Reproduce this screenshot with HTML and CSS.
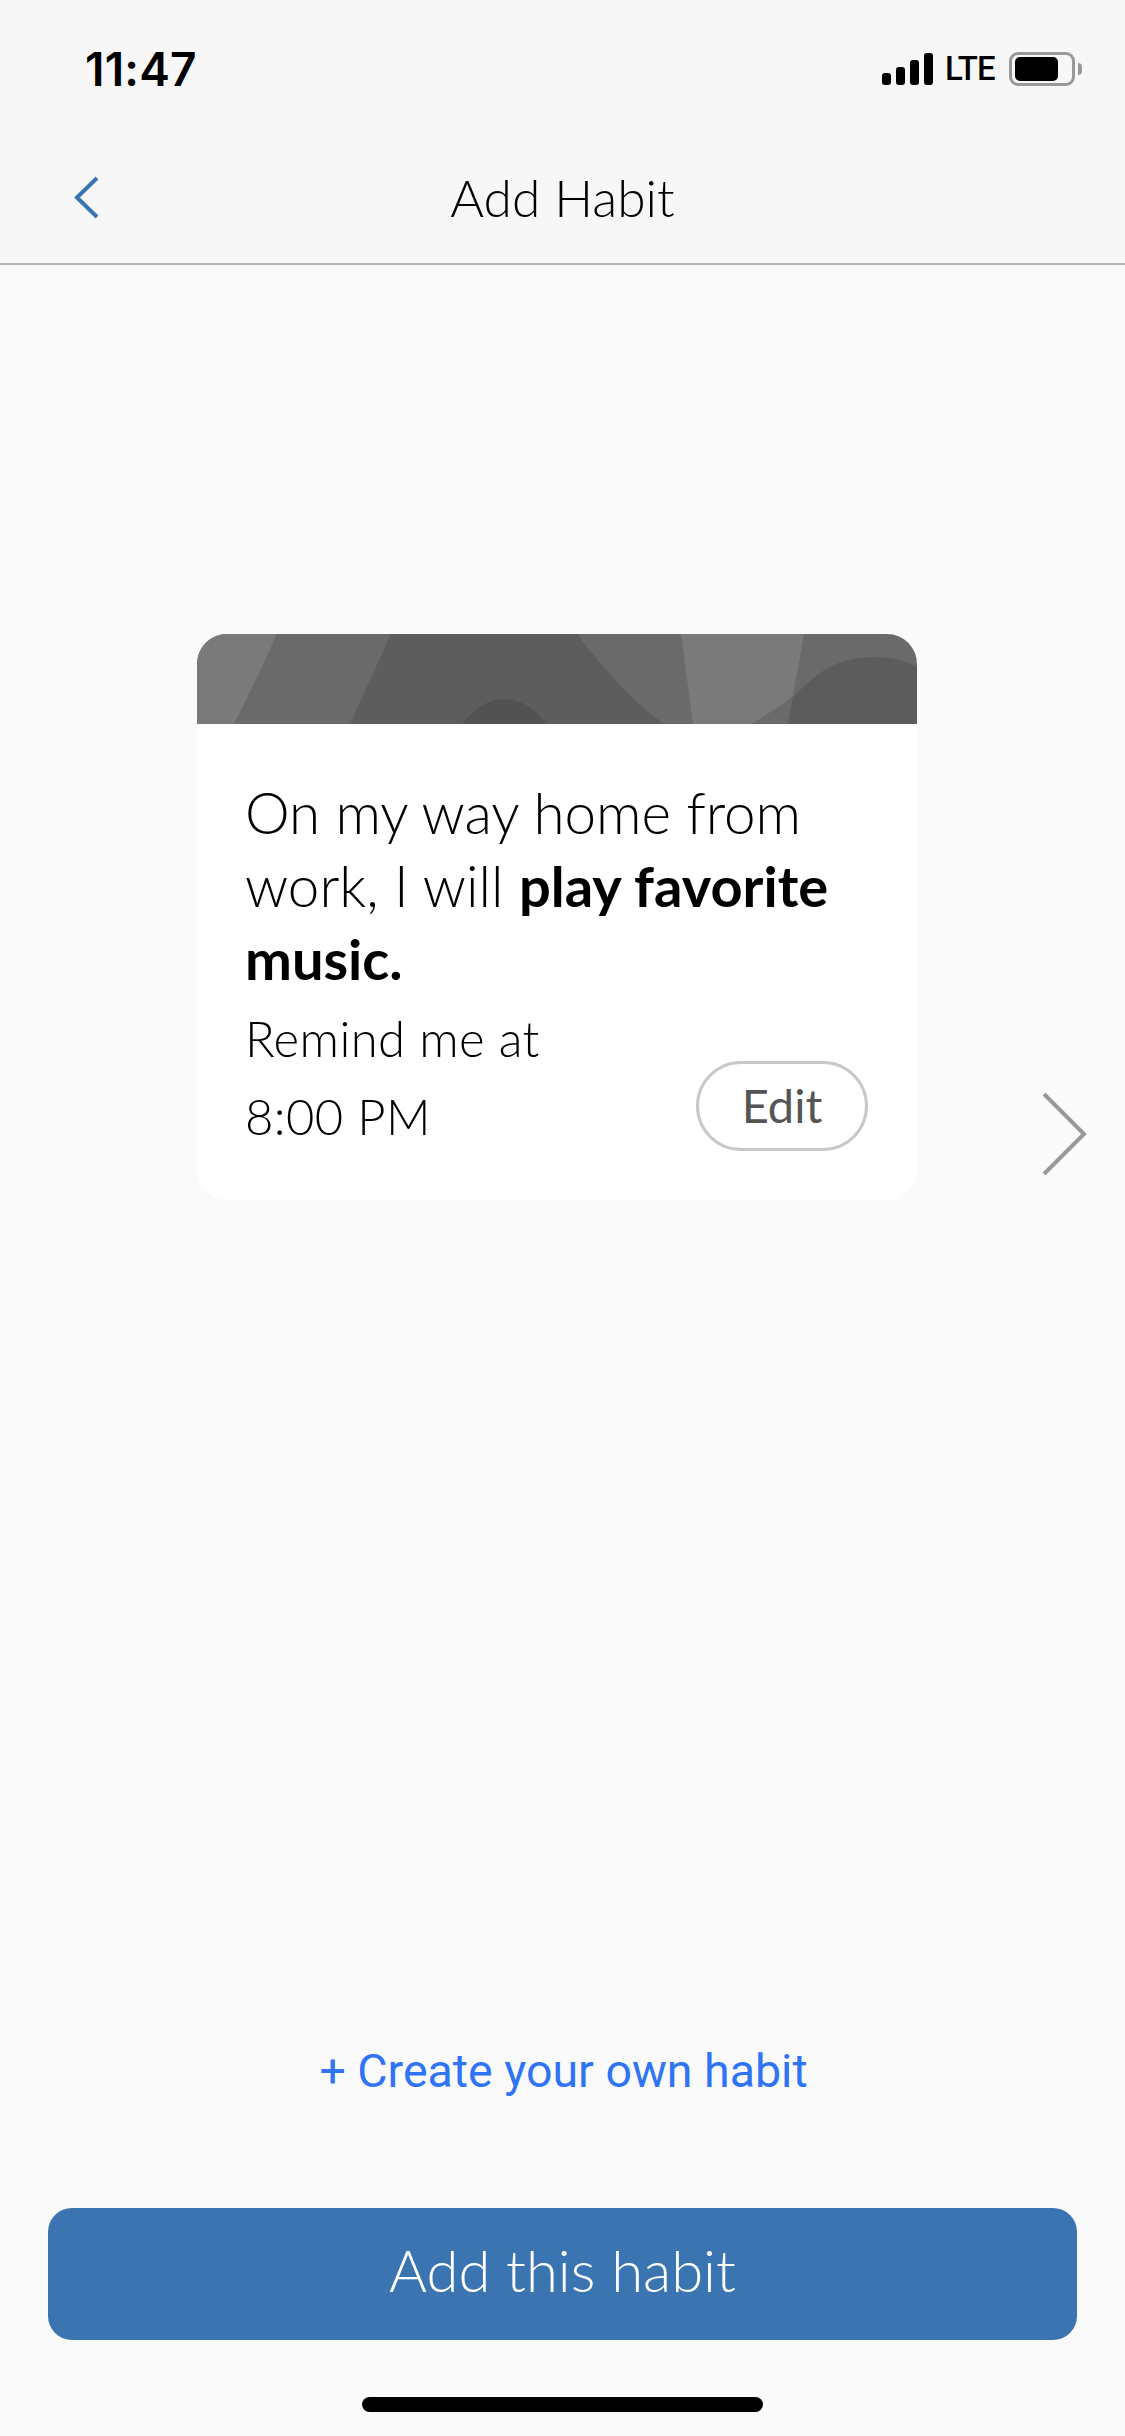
FILE: index.html
```html
<!DOCTYPE html>
<html lang="en">
<head>
<meta charset="UTF-8">
<title>Add Habit</title>
<link rel="stylesheet" href="styles.css">
</head>
<body>
  <div class="page">
    <!-- top bar -->
    <header class="top">
      <div class="status">
        <span class="time">11:47</span>
        <div class="status-right">
          <div class="signal">
            <span class="bar bar1"></span>
            <span class="bar bar2"></span>
            <span class="bar bar3"></span>
            <span class="bar bar4"></span>
          </div>
          <span class="lte">LTE</span>
          <div class="battery"><span class="battery-fill"></span></div>
          <span class="battery-nub"></span>
        </div>
      </div>
      <nav class="nav">
        <svg class="back" width="25" height="43" viewBox="0 0 25 43"><path d="M23 2 L3 21.5 L23 41" fill="none" stroke="#3a75b1" stroke-width="4"/></svg>
        <h1 class="title">Add Habit</h1>
      </nav>
    </header>

    <!-- habit card -->
    <main class="main">
      <div class="card">
        <svg class="card-art" width="720" height="90" viewBox="0 0 720 90">
          <rect width="720" height="90" fill="#6a6a6a"/>
          <path d="M0 0 L80 0 Q60 45 37 90 L0 90 Z" fill="#7a7a7a"/>
          <path d="M194 0 L380 0 Q425 60 467 90 L153 90 Z" fill="#5d5d5d"/>
          <path d="M484 0 L607 0 L591 90 L496 90 Z" fill="#7a7a7a"/>
          <path d="M265 90 Q285 65 307 65 Q330 65 350 90 Z" fill="#525252"/>
          <path d="M554 90 Q575 78 598 61 C630 28 650 23 681 23 Q700 23 720 33 L720 90 Z" fill="#000" fill-opacity=".13"/>
        </svg>
        <div class="card-body">
          <p class="habit">On my way home from<br>work, I will <strong>play favorite</strong><br><strong>music.</strong></p>
          <div class="remind-row">
            <p class="remind">Remind me at<br>8:00 PM</p>
            <button class="edit">Edit</button>
          </div>
        </div>
      </div>
      <svg class="next" width="45" height="84" viewBox="0 0 45 84"><path d="M2 2 L42 42 L2 82" fill="none" stroke="#999" stroke-width="4"/></svg>
    </main>

    <!-- bottom actions -->
    <footer class="bottom">
      <a class="create">+ Create your own habit</a>
      <button class="add">Add this habit</button>
      <div class="home-bar"></div>
    </footer>
  </div>
</body>
</html>
```

FILE: styles.css
```css
body{
  margin:0;
  background:#fafafa;
  font-family:'Lato',sans-serif;
  color:#000;
}
.page{
  width:1125px;
  height:2436px;
  display:flex;
  flex-direction:column;
  overflow:hidden;
}

/* top bar */
.top{
  height:265px;
  box-sizing:border-box;
  background:#f7f7f7;
  border-bottom:2px solid #b4b4b4;
}
.status{
  height:139px;
  padding:0 43px 0 85px;
  display:flex;
  justify-content:space-between;
  align-items:flex-start;
}
.time{
  margin-top:43px;
  font-family:'Inter',sans-serif;
  font-size:46px;
  line-height:52px;
  font-weight:600;
  letter-spacing:.2px;
}
.status-right{
  margin-top:52px;
  display:flex;
  align-items:center;
  height:34px;
}
.signal{display:flex;align-items:flex-end;gap:5px;height:32px;}
.bar{width:9px;background:#000;border-radius:3px;}
.bar1{height:12px;}
.bar2{height:18px;}
.bar3{height:25px;}
.bar4{height:32px;}
.lte{
  margin-left:12px;
  width:51px;
  font-family:'Roboto',sans-serif;
  font-size:33px;
  line-height:34px;
  font-weight:500;
  letter-spacing:-1px;
  white-space:nowrap;
}
.battery{
  margin-left:13px;
  width:66px;
  height:34px;
  box-sizing:border-box;
  border:3px solid #999;
  border-radius:9px;
  padding:2px 3px;
  display:flex;
}
.battery-fill{width:43px;background:#000;border-radius:5px;}
.battery-nub{
  margin-left:3px;
  width:4px;
  height:12px;
  background:#999;
  border-radius:0 4px 4px 0;
}
.nav{
  height:124px;
  display:flex;
  align-items:center;
  justify-content:center;
  position:relative;
}
.back{position:absolute;left:74px;top:37px;}
.title{
  margin:0;
  font-size:51.5px;
  line-height:56px;
  font-weight:300;
  position:relative;
  top:-4px;
}

/* card */
.main{
  flex:1;
  padding:369px 0 0 197px;
  display:flex;
  align-items:flex-start;
}
.card{
  width:720px;
  height:566px;
  background:#fff;
  border-radius:30px;
  overflow:hidden;
}
.card-art{display:block;}
.card-body{padding:52px 48px 0 48px;}
.habit{
  margin:0;
  font-size:56.5px;
  line-height:73px;
  font-weight:300;
}
.habit strong{font-weight:700;font-size:56px;}
.remind-row{
  display:flex;
  justify-content:space-between;
  align-items:flex-start;
}
.remind{
  margin:0;
  padding-top:4px;
  font-size:49px;
  line-height:78px;
  font-weight:300;
  letter-spacing:.4px;
}
.edit{
  margin-top:66px;
  margin-right:1px;
  width:172px;
  height:90px;
  background:#fff;
  border:3px solid #c8c8c8;
  border-radius:45px;
  font-family:inherit;
  font-size:47px;
  font-weight:400;
  color:#555;
  padding:0 0 3px;
}
.next{margin:458px 0 0 125px;flex:none;}

/* bottom */
.bottom{
  display:flex;
  flex-direction:column;
  align-items:center;
}
.create{
  font-family:'Roboto',sans-serif;
  font-size:46.5px;
  line-height:52px;
  color:#2f74f5;
  margin-bottom:111px;
  position:relative;
  left:1px;
}
.add{
  width:1029px;
  height:132px;
  background:#3a75b1;
  border:0;
  border-radius:24px;
  color:#fff;
  font-family:inherit;
  font-size:58px;
  font-weight:300;
  padding:0 0 9px;
}
.home-bar{
  width:401px;
  height:15px;
  margin:57px 0 24px;
  background:#000;
  border-radius:8px;
}
```
